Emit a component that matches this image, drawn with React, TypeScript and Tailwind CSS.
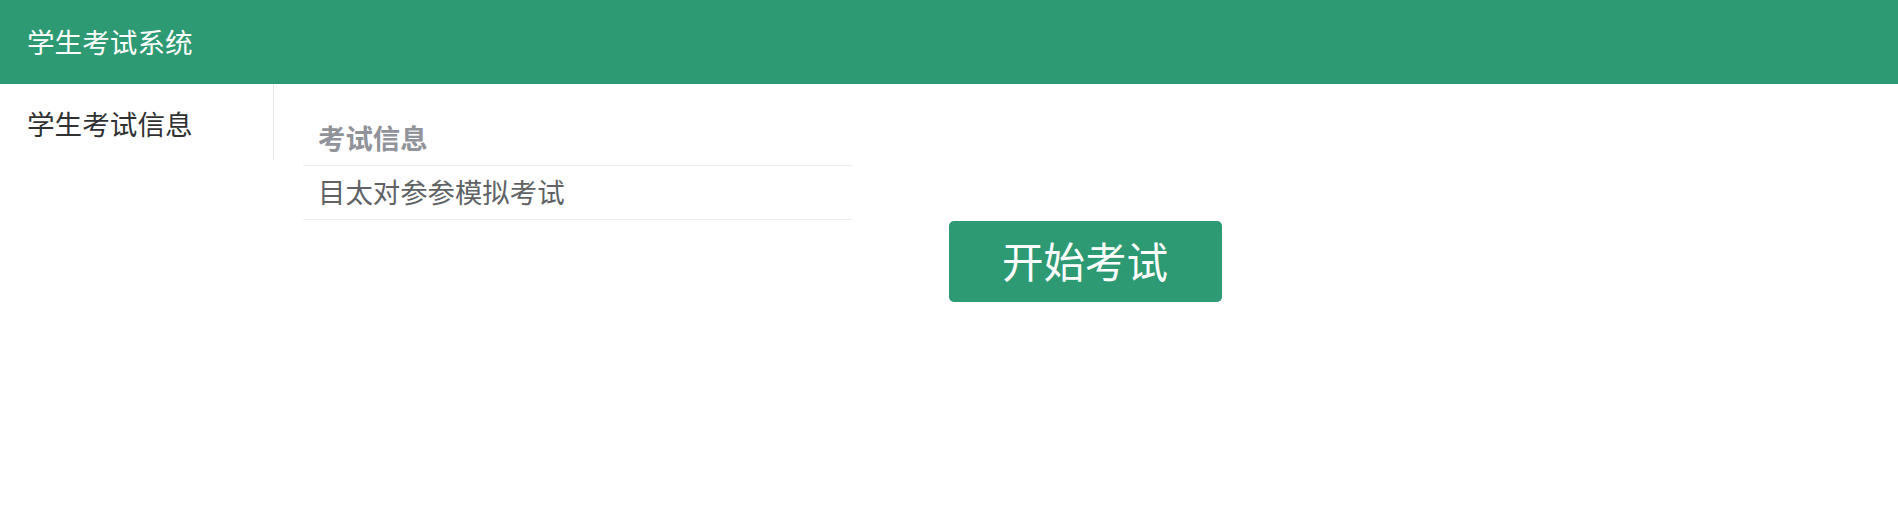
import React from "react";

const font = { fontFamily: '"Microsoft YaHei", "Noto Sans CJK SC", "Noto Sans", sans-serif' };

const exams = [{ name: "目太对参参模拟考试" }];

const App = () => {
  return (
    <div className="w-[1898px] h-[516px] bg-white" style={font}>
      {/* Header */}
      <header className="h-[84px] bg-[#2e9a73] flex items-center px-[27px]">
        <h1 className="text-[27.6px] text-white leading-none">学生考试系统</h1>
      </header>

      <div className="flex">
        {/* Sidebar */}
        <aside className="w-[274px] h-[76px] border-r border-[#e6e6e6] shrink-0">
          <div className="h-[76px] px-[27px] pt-[20px] text-[27.6px] leading-[38px] text-[#303133]">
            学生考试信息
          </div>
        </aside>

        {/* Main */}
        <main className="flex-1 flex flex-col">
          <div className="pl-[29px] pt-[27px]">
            <table className="w-[549px] border-collapse text-[27.4px]">
              <thead>
                <tr className="border-b border-[#ebeef5]">
                  <th className="h-[54px] px-[15px] text-left font-bold text-[#909399]">考试信息</th>
                </tr>
              </thead>
              <tbody>
                {exams.map((e, idx) => (
                  <tr key={idx} className="border-b border-[#ebeef5]">
                    <td className="h-[54px] px-[15px] text-[#606266]">{e.name}</td>
                  </tr>
                ))}
              </tbody>
            </table>
          </div>
          <div className="flex justify-center pt-[1px] pr-[2px]">
            <button className="w-[273px] h-[81px] bg-[#2e9a73] rounded-[5px] text-white text-[41.5px] leading-none">
              开始考试
            </button>
          </div>
        </main>
      </div>
    </div>
  );
};

export default App;
